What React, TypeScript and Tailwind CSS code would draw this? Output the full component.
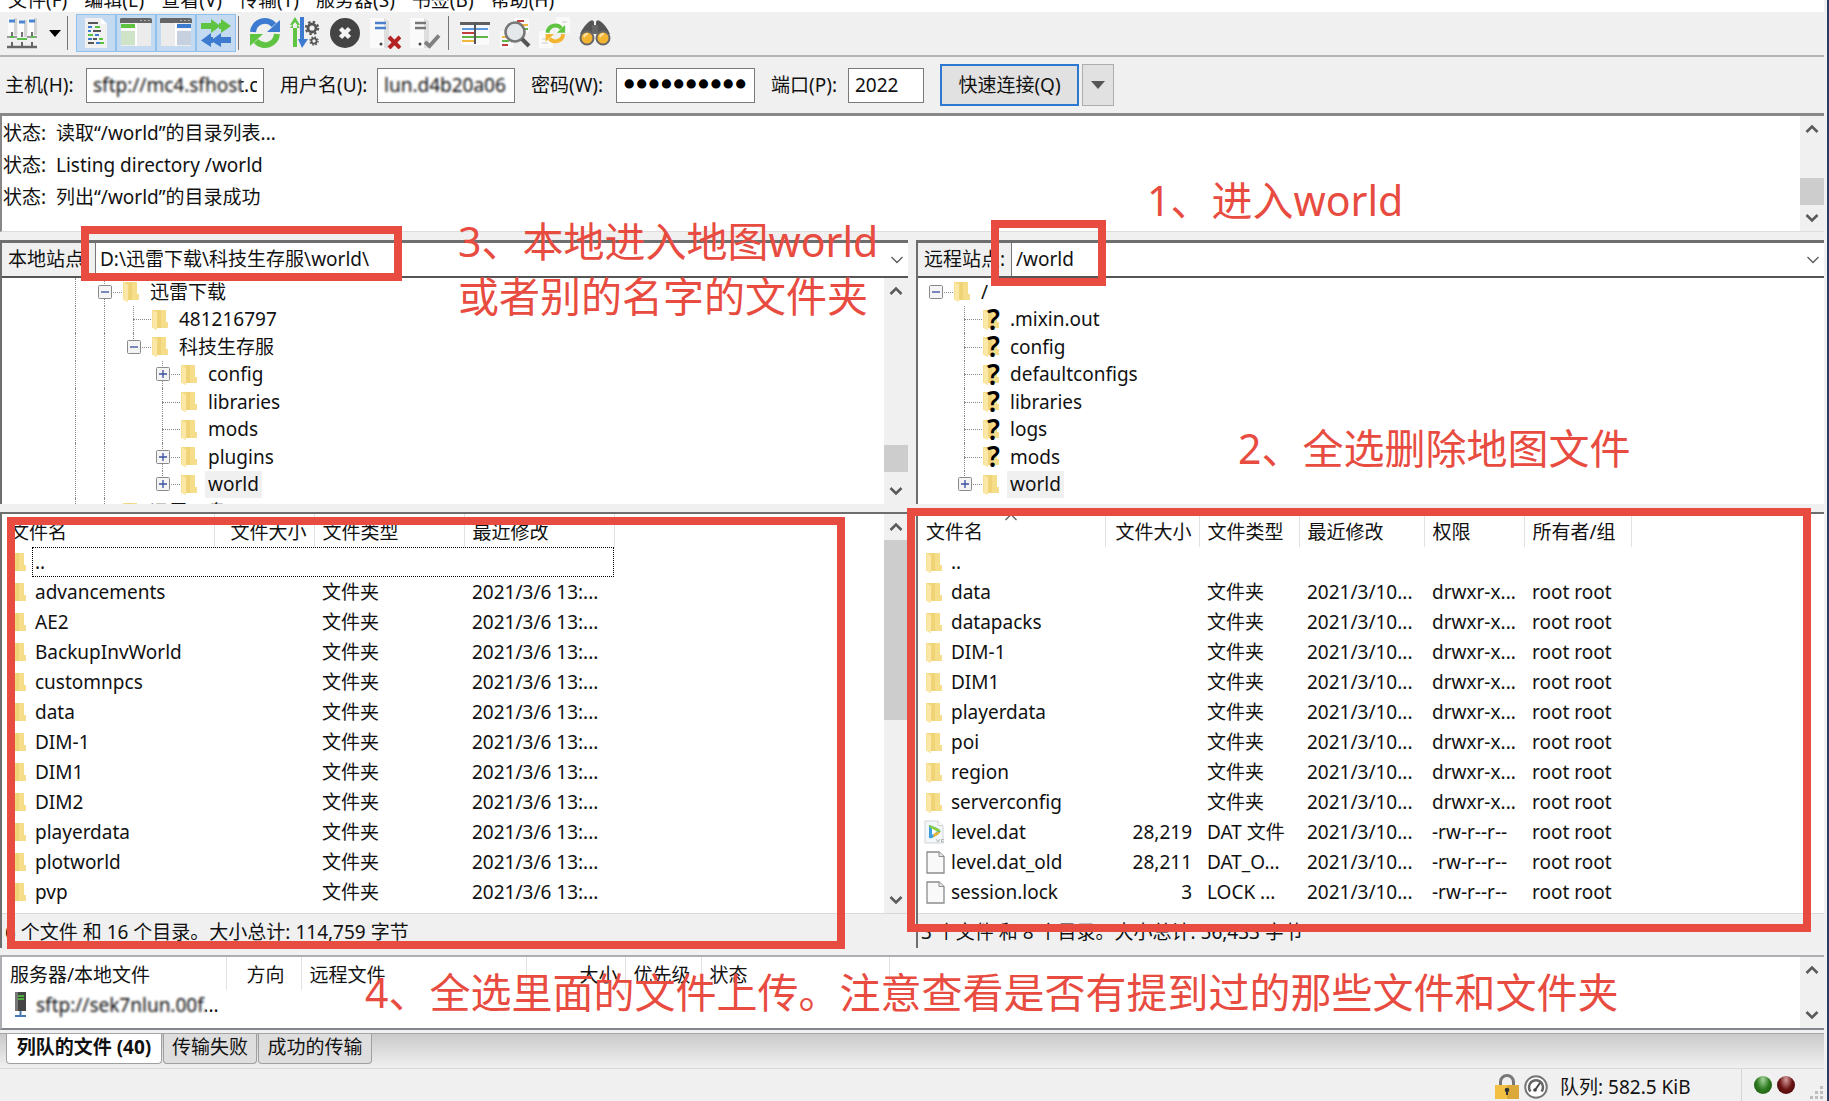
import React from "react";

type Line = "full" | "top" | "none";

/* ---------- small drawings ---------- */

function Folder() {
  return (
    <svg width="16" height="21" viewBox="0 0 16 21" aria-hidden="true">
      <path d="M1 1 H14 V13 H15.5 V19 H5 V21 L0 18.5 V1Z" fill="#f3d980" />
      <path d="M6 1 H14 V13 H15.5 V19 H5Z" fill="#f0d277" />
      <path d="M9 1 H14 V13 H15.5 V19 H9Z" fill="#f6dd8a" />
      <path d="M0.5 1 L5 4 V21 L0.5 18.5Z" fill="#fbe7a6" />
    </svg>
  );
}

function UnknownFolder() {
  return (
    <span className="relative block h-[21px] w-4">
      <Folder />
      <span className="absolute -top-1 left-1 text-[28px] leading-7 font-semibold text-black">?</span>
    </span>
  );
}

function FileIcon() {
  return (
    <svg width="19" height="23" viewBox="0 0 19 23" aria-hidden="true">
      <path d="M1 1 H13 L18 5.500 V22 H1Z" fill="#f9f9f9" stroke="#8c8c8c" strokeWidth="1.300" />
      <path d="M13 1 V5.500 H18" fill="#e8e8e8" stroke="#8c8c8c" />
    </svg>
  );
}

function MediaIcon() {
  return (
    <svg className="-ml-0.5" width="23" height="24" viewBox="0 0 23 24" aria-hidden="true">
      <path d="M1 1 H14 L19 5.500 V23 H1Z" fill="#f4f7fa" stroke="#cfd3d7" />
      <path d="M14 1 V5.500 H19" fill="#fff" stroke="#cfd3d7" />
      <path d="M5 6 Q4 4 8 6 Q17 9 16.500 11.500 Q16 14 8 18 Q4 19 5 16Z" fill="#3aa0e0" />
      <path d="M5 6 Q4 4 8 6 Q17 9 16.500 11.500 H10Z" fill="#8ccf3c" />
      <path d="M16.500 11.500 Q16 14 9 17.500 L10 13Z" fill="#f2b632" />
      <path d="M8 8.500 L13 11.500 L8 15Z" fill="#fff" />
      <path d="M12 19 L14 22 L16 19 M20 19.500 H17.500 V22 H20" fill="none" stroke="#b5b5b5" />
    </svg>
  );
}

function Chevron({ up, thin }: { up?: boolean; thin?: boolean }) {
  return (
    <svg width="14" height="10" viewBox="0 0 14 10" aria-hidden="true">
      <path d={up ? "M1.500 8 L7 2.500 L12.500 8" : "M1.500 2 L7 7.500 L12.500 2"} fill="none" stroke="#5a5a5a" strokeWidth={thin ? 1.3 : 2.6} />
    </svg>
  );
}

function Refresh({ a, b }: { a: string; b: string }) {
  return (
    <g fill="none" strokeWidth="6">
      <path d="M4 15 A12 12 0 0 1 25 8" stroke={a} />
      <path d="M31 3 V15 H18Z" fill={a} stroke="none" />
      <path d="M28 17 A12 12 0 0 1 7 24" stroke={b} />
      <path d="M1 29 V17 H14Z" fill={b} stroke="none" />
    </g>
  );
}

function Gear({ x, y, r }: { x: number; y: number; r: number }) {
  return (
    <g stroke="#555" fill="none">
      <circle cx={x} cy={y} r={r} strokeWidth={r * 0.7} />
      <circle cx={x} cy={y} r={r * 1.55} strokeWidth={r * 0.5} strokeDasharray={`${r * 0.61} ${r * 0.61}`} />
    </g>
  );
}

const icons: Record<string, React.ReactNode> = {
  sites: (
    <g>
      {[2, 12, 22].map((x, i) => (
        <g key={x}>
          <path d={`M${x} ${i === 1 ? 3 : 1} h8 v17 h-8z`} fill="#fbfbfb" />
          <path d={`M${x + 6} ${i === 1 ? 3 : 1} h3 v17 h-3z`} fill="#d4d4d4" />
          <path d={`M${x + 1} ${i === 1 ? 5 : 4} h6`} stroke="#4a86d0" strokeWidth="3" />
          <path d={`M${x + 4} 15 v5`} stroke="#444" strokeWidth="1.500" />
        </g>
      ))}
      <path d="M1 20 H11 M21 20 H31" stroke="#999" strokeWidth="2" />
      <path d="M4 20 H8 M11 22 H21 M25 20 H29" stroke="#5cbf4a" strokeWidth="2" />
      <path d="M1 30 H31" stroke="#666" strokeWidth="2.500" />
      <path d="M6 25 V30 M16 25 V30 M26 25 V30" stroke="#666" strokeWidth="2" />
    </g>
  ),
  log: (
    <g>
      <path d="M5 1 H21 L27 7 V31 H5Z" fill="#f1f1f1" />
      <path d="M21 1 V7 H27Z" fill="#fff" />
      <g strokeWidth="2">
        <path d="M8 6 H18 M13 14 H21 M13 22 H17 M8 26 H14" stroke="#555" />
        <path d="M8 10 H12 M17 10 H20 M8 14 H11 M8 22 H12 M16 26 H20" stroke="#3d7bd0" />
        <path d="M15 10 H20 M8 18 H13 M19 22 H23 M20 26 H24" stroke="#58c340" />
        <path d="M15 18 H19" stroke="#3d7bd0" />
      </g>
    </g>
  ),
  local: (
    <g>
      <path d="M1 2 H31 V29 H1Z" fill="#ececec" />
      <path d="M1 7 H15 V11 H1Z" fill="#5fc441" />
      <path d="M1 14 H15 V28 H1Z" fill="#cfe3c9" />
      <path d="M16 6 V29 M1 12.500 H15" stroke="#fff" strokeWidth="2" />
      <path d="M0 6 V2 Q0 1 2 1 H30 Q32 1 32 3 V6Z" fill="#666" />
      <path d="M20 3.500 H30" stroke="#aaa" strokeDasharray="2 2" />
    </g>
  ),
  remote: (
    <g>
      <path d="M1 2 H31 V29 H1Z" fill="#ececec" />
      <path d="M17 7 H31 V11 H17Z" fill="#3d7bd0" />
      <path d="M17 14 H31 V28 H17Z" fill="#c6d0de" />
      <path d="M16 6 V29 M17 12.500 H31" stroke="#fff" strokeWidth="2" />
      <path d="M0 6 V2 Q0 1 2 1 H30 Q32 1 32 3 V6Z" fill="#666" />
      <path d="M20 3.500 H30" stroke="#aaa" strokeDasharray="2 2" />
    </g>
  ),
  queue: (
    <g>
      <path d="M1 6 H11 V2 L19 8 V6 H21 V2 L31 9 L21 16 V12 H19 V10 L11 16 V12 H1Z" fill="#5fc441" />
      <path d="M31 20 H21 V16 L13 22 V20 H11 V16 L1 23.500 L11 30 V26 H13 V25 L21 30 V26 H31Z" fill="#3d7bd0" />
    </g>
  ),
  refresh: <Refresh a="#3d7bd0" b="#5fc441" />,
  process: (
    <g>
      <path d="M6 0 L11 8 H8 V30 H4 V8 H1Z M1 11 H11 L6 5Z" fill="#5fc441" />
      <path d="M11 0 H15 V22 H19 L13 31 L9 22 H11Z" fill="#3d7bd0" />
      <Gear x={23} y={11} r={4} />
      <Gear x={25} y={24} r={2.6} />
    </g>
  ),
  cancel: (
    <g>
      <circle cx="16" cy="16" r="15" fill="#444" />
      <path d="M11.500 11.500 L20.500 20.500 M20.500 11.500 L11.500 20.500" stroke="#f4f4f4" strokeWidth="4.500" />
    </g>
  ),
  disconnect: (
    <g>
      <path d="M1 1 H15 L20 3 V31 H1Z" fill="#fafafa" />
      <path d="M15 1 L20 4 V31 H15Z" fill="#dedede" />
      <path d="M6 6 H17 M6 11 H17" stroke="#4a80cc" strokeWidth="2.500" />
      <circle cx="12" cy="27" r="1.500" fill="#444" />
      <path d="M20 20 L31 31 M31 20 L20 31" stroke="#b52424" strokeWidth="4" />
    </g>
  ),
  reconnect: (
    <g>
      <path d="M1 1 H15 L20 3 V31 H1Z" fill="#fafafa" />
      <path d="M15 1 L20 4 V31 H15Z" fill="#dedede" />
      <path d="M6 6 H17 M6 11 H17" stroke="#777" strokeWidth="2.500" />
      <circle cx="11" cy="27" r="1.500" fill="#444" />
      <path d="M16 25 L20.500 29 L30 18.500" stroke="#808080" strokeWidth="4" fill="none" />
    </g>
  ),
  filter: (
    <g>
      <path d="M2 8 H30 V28 H2Z" fill="#fafafa" />
      <path d="M1 8 V5 H31 V8Z" fill="#606060" />
      <g strokeWidth="2">
        <path d="M3 12 H29" stroke="#5b9ae0" />
        <path d="M3 16 H15" stroke="#c04040" />
        <path d="M3 20 H29" stroke="#5fb545" />
        <path d="M3 24 H15" stroke="#f0b840" />
      </g>
      <path d="M16 6 V27" stroke="#555" strokeWidth="2" />
    </g>
  ),
  search: (
    <g>
      <path d="M15 1 H30 V16 H15Z M1 14 H14 V31 H1Z" fill="#fafafa" />
      <g strokeWidth="2">
        <path d="M18 4 H25" stroke="#c04040" />
        <path d="M23 8 H29 M3 20 H8" stroke="#f0b840" />
        <path d="M26 12 H29 M3 24 H10" stroke="#5fb545" />
        <path d="M3 28 H9" stroke="#c04040" />
      </g>
      <circle cx="16" cy="15" r="9.500" fill="#e4e8ea" stroke="#777" strokeWidth="2.500" />
      <path d="M23 22 L30 29" stroke="#555" strokeWidth="4" />
    </g>
  ),
  sync: (
    <g>
      <path d="M17 0 H31 V16 H17Z M0 14 H14 V31 H0Z" fill="#fafafa" />
      <path d="M3 22 H8 M3 26 H9 M23 5 H28" stroke="#ccc" />
      <g transform="translate(6 6) scale(0.650)">
        <Refresh a="#5fc441" b="#f3b531" />
      </g>
    </g>
  ),
  find: (
    <g>
      <path d="M11 4 Q14 2 15 5 V17 H1 Q5 8 11 4Z M21 4 Q18 2 17 5 V17 H31 Q27 8 21 4Z" fill="#555" />
      <path d="M13 8 H19 V17 H13Z" fill="#666" />
      <circle cx="8" cy="21" r="6.500" fill="#f3b531" stroke="#666" strokeWidth="2" />
      <circle cx="24" cy="21" r="6.500" fill="#f3b531" stroke="#666" strokeWidth="2" />
      <path d="M5 20 A4 4 0 0 1 9 17 M21 20 A4 4 0 0 1 25 17" stroke="#fbe3a0" strokeWidth="2" fill="none" />
    </g>
  ),
};

function ToolButton({ icon, label, on }: { icon: string; label: string; on?: boolean }) {
  return (
    <button
      type="button"
      aria-label={label}
      className={
        on
          ? "flex h-[38px] w-10 items-center justify-center border border-[#90c0ee] bg-[#c3daf1]"
          : "flex h-[38px] w-10 items-center justify-center"
      }
    >
      <svg width="32" height="32" viewBox="0 0 32 32" aria-hidden="true">
        {icons[icon]}
      </svg>
    </button>
  );
}

function Separator() {
  return <span className="h-[34px] w-px bg-[#777]" />;
}

/* ---------- shared controls ---------- */

function Scrollbar({ children, className }: { children?: React.ReactNode; className?: string }) {
  return (
    <div className={"flex w-6 shrink-0 flex-col bg-[#f0f0f0] " + (className ?? "")}>
      <button type="button" aria-label="向上滚动" className="flex h-[26px] items-center justify-center">
        <Chevron up />
      </button>
      <div className="flex flex-1 flex-col">{children}</div>
      <button type="button" aria-label="向下滚动" className="flex h-[26px] items-center justify-center">
        <Chevron />
      </button>
    </div>
  );
}

function SiteBar({ id, label, value, labelWidth }: { id: string; label: string; value: string; labelWidth: string }) {
  return (
    <div className="flex h-[35px] border-b-2 border-[#555] bg-[#f0f0f0]">
      <label htmlFor={id} className={"flex shrink-0 items-center overflow-hidden whitespace-nowrap pb-0.5 pl-[6px] " + labelWidth}>
        {label}
      </label>
      <div className="relative flex-1 border-l border-[#777] bg-white">
        <select id={id} className="h-full w-full appearance-none bg-transparent pb-0.5 pl-1 outline-none" defaultValue={value}>
          <option value={value}>{value}</option>
        </select>
        <span className="pointer-events-none absolute inset-y-0 right-1 flex items-center">
          <Chevron thin />
        </span>
      </div>
    </div>
  );
}

interface Node {
  name: string;
  guides: boolean[];
  line: Line;
  box?: "+" | "-";
  unknown?: boolean;
  selected?: boolean;
}

const lineClass: Record<Line, string> = {
  full: "absolute inset-y-0 left-[14px] border-l border-dotted border-[#888]",
  top: "absolute top-0 left-[14px] h-1/2 border-l border-dotted border-[#888]",
  none: "hidden",
};

function TreeRow({ node }: { node: Node }) {
  return (
    <li className="flex min-h-0 items-stretch">
      {node.guides.map((g, i) => (
        <span key={i} className="relative w-[29px] shrink-0">
          <span className={lineClass[g ? "full" : "none"]} />
        </span>
      ))}
      <span className="relative flex w-[29px] shrink-0 items-center justify-center">
        <span className={lineClass[node.line]} />
        <span className="absolute top-1/2 right-[-3px] left-[14px] border-t border-dotted border-[#888]" />
        {node.box && (
          <button type="button" aria-label={node.box === "+" ? "展开" : "折叠"} className="relative">
            <svg width="14" height="14" viewBox="0 0 14 14" aria-hidden="true">
              <rect x="0.500" y="0.500" width="13" height="13" rx="1" fill="#f4f4f4" stroke="#8a8a8a" />
              <path d={node.box === "+" ? "M3 7 H11 M7 3 V11" : "M3 7 H11"} stroke="#3a4fa0" strokeWidth="1.300" />
            </svg>
          </button>
        )}
      </span>
      <span className="ml-1 flex w-4 shrink-0 items-center">{node.unknown ? <UnknownFolder /> : <Folder />}</span>
      <span
        className={
          node.selected
            ? "ml-2 flex items-center bg-[#f0f0f0] px-[3px] whitespace-nowrap"
            : "ml-2 flex items-center px-[3px] whitespace-nowrap"
        }
      >
        {node.name}
      </span>
    </li>
  );
}

const localTree: Node[] = [
  { name: "迅雷下载", guides: [true], line: "full", box: "-" },
  { name: "481216797", guides: [true, true], line: "full" },
  { name: "科技生存服", guides: [true, true], line: "top", box: "-" },
  { name: "config", guides: [true, true, false], line: "full", box: "+" },
  { name: "libraries", guides: [true, true, false], line: "full" },
  { name: "mods", guides: [true, true, false], line: "full" },
  { name: "plugins", guides: [true, true, false], line: "full", box: "+" },
  { name: "world", guides: [true, true, false], line: "top", box: "+", selected: true },
];

const remoteTree: Node[] = [
  { name: "/", guides: [], line: "none", box: "-" },
  { name: ".mixin.out", guides: [false], line: "full", unknown: true },
  { name: "config", guides: [false], line: "full", unknown: true },
  { name: "defaultconfigs", guides: [false], line: "full", unknown: true },
  { name: "libraries", guides: [false], line: "full", unknown: true },
  { name: "logs", guides: [false], line: "full", unknown: true },
  { name: "mods", guides: [false], line: "full", unknown: true },
  { name: "world", guides: [false], line: "top", box: "+", selected: true },
];

const localFiles = [
  "advancements",
  "AE2",
  "BackupInvWorld",
  "customnpcs",
  "data",
  "DIM-1",
  "DIM1",
  "DIM2",
  "playerdata",
  "plotworld",
  "pvp",
];

type RemoteFile = { name: string; size: string; type: string; perm: string; icon: "folder" | "media" | "file" };

const remoteFiles: RemoteFile[] = [
  ...["data", "datapacks", "DIM-1", "DIM1", "playerdata", "poi", "region", "serverconfig"].map(
    (name): RemoteFile => ({ name, size: "", type: "文件夹", perm: "drwxr-x...", icon: "folder" }),
  ),
  { name: "level.dat", size: "28,219", type: "DAT 文件", perm: "-rw-r--r--", icon: "media" },
  { name: "level.dat_old", size: "28,211", type: "DAT_O...", perm: "-rw-r--r--", icon: "file" },
  { name: "session.lock", size: "3", type: "LOCK ...", perm: "-rw-r--r--", icon: "file" },
];

const th = "h-[33px] border-r border-[#e2e2e2] px-2 pt-0.5 text-left font-normal whitespace-nowrap";
const thRight = "h-[33px] border-r border-[#e2e2e2] px-[7px] pt-0.5 text-right font-normal whitespace-nowrap";
const td = "h-[30px] px-2 whitespace-nowrap";
const tdRight = "h-[30px] px-[7px] text-right whitespace-nowrap";

function NameCell({ icon, name }: { icon: React.ReactNode; name: string }) {
  return (
    <div className="flex items-center">
      <span className="flex w-[25px] shrink-0 items-center">{icon}</span>
      {name}
    </div>
  );
}

function Frame({ className }: { className: string }) {
  return <div aria-hidden="true" className={"pointer-events-none absolute z-10 border-8 border-[#e84b40] " + className} />;
}

function Note({ className, children }: { className: string; children: React.ReactNode }) {
  return (
    <p className={"pointer-events-none absolute z-10 text-[41px] leading-[55px] whitespace-nowrap text-[#e84b40] " + className}>
      {children}
    </p>
  );
}

function Field({ id, label, labelWidth, children }: { id: string; label: string; labelWidth: string; children: React.ReactNode }) {
  return (
    <div className="flex items-center">
      <label htmlFor={id} className={"whitespace-nowrap " + labelWidth}>
        {label}
      </label>
      {children}
    </div>
  );
}

const inputBox = "h-[35px] border border-[#7a7a7a] bg-white px-[6px] outline-none ";

export default function App() {
  return (
    <div className="relative flex min-h-screen flex-col overflow-hidden border-r-2 border-[#2c3d63] bg-[#f0f0f0] pr-[3px] font-['Noto_Sans','Noto_Sans_CJK_SC',sans-serif] text-[19px] leading-6 text-[#111]">
      <nav className="flex h-3 items-end gap-[17px] overflow-hidden bg-white pl-2">
        {["文件(F)", "编辑(E)", "查看(V)", "传输(T)", "服务器(S)", "书签(B)", "帮助(H)"].map((m) => (
          <button key={m} type="button" className="leading-6 whitespace-nowrap">
            {m}
          </button>
        ))}
      </nav>

      <div className="flex h-[45px] items-center border-b-2 border-[#b5b5b5] pb-px pl-[2px]">
        <ToolButton icon="sites" label="站点管理器" />
        <button type="button" aria-label="站点列表" className="flex h-[38px] w-[25px] items-center justify-center">
          <svg width="12" height="7" viewBox="0 0 12 7" aria-hidden="true">
            <path d="M0 0 H12 L6 7Z" fill="#000" />
          </svg>
        </button>
        <Separator />
        <div className="ml-2 flex">
          <ToolButton icon="log" label="消息日志" on />
          <ToolButton icon="local" label="本地目录树" on />
          <ToolButton icon="remote" label="远程目录树" on />
          <ToolButton icon="queue" label="传输队列" on />
        </div>
        <span className="w-0.5" />
        <Separator />
        <div className="ml-[6px] flex pr-[3px]">
          <ToolButton icon="refresh" label="刷新" />
          <ToolButton icon="process" label="处理队列" />
          <ToolButton icon="cancel" label="取消" />
          <ToolButton icon="disconnect" label="断开" />
          <ToolButton icon="reconnect" label="重新连接" />
        </div>
        <Separator />
        <div className="ml-[6px] flex">
          <ToolButton icon="filter" label="过滤器" />
          <ToolButton icon="search" label="目录比较" />
          <ToolButton icon="sync" label="同步浏览" />
          <ToolButton icon="find" label="查找文件" />
        </div>
      </div>

      <form className="flex h-14 items-center gap-4 pl-[5px]" onSubmit={(e) => e.preventDefault()}>
        <Field id="host" label="主机(H):" labelWidth="w-[81px]">
          <div className="relative">
            <input id="host" defaultValue="sftp://mc4.sfhost.c" className={inputBox + "w-[178px]"} />
            <span className="pointer-events-none absolute top-1 bottom-1 left-1 w-[152px] backdrop-blur-[1px]" />
          </div>
        </Field>
        <Field id="user" label="用户名(U):" labelWidth="w-[97px]">
          <div className="relative">
            <input id="user" defaultValue="lun.d4b20a06" className={inputBox + "w-[138px]"} />
            <span className="pointer-events-none absolute inset-1 backdrop-blur-[1px]" />
          </div>
        </Field>
        <Field id="pass" label="密码(W):" labelWidth="w-[85px]">
          <input
            id="pass"
            type="password"
            defaultValue="0123456789"
            className={inputBox + "w-[139px] font-['DejaVu_Sans',sans-serif] text-[21px] text-black [-webkit-text-stroke:3px_black]"}
          />
        </Field>
        <Field id="port" label="端口(P):" labelWidth="w-[77px]">
          <input id="port" defaultValue="2022" className={inputBox + "w-[76px]"} />
        </Field>
        <div className="flex gap-[3px]">
          <button type="submit" className="h-[42px] w-[139px] border-2 border-[#2f78d2] bg-[#e1e1e1] whitespace-nowrap">
            快速连接(Q)
          </button>
          <button type="button" aria-label="快速连接历史" className="flex h-[42px] w-8 items-center justify-center border border-[#adadad] bg-[#e1e1e1]">
            <svg width="14" height="8" viewBox="0 0 14 8" aria-hidden="true">
              <path d="M0 0 H14 L7 8Z" fill="#555" />
            </svg>
          </button>
        </div>
      </form>

      <section className="relative flex h-[119px] border-t-[3px] border-b border-l-2 border-t-[#888] border-b-[#ddd] border-l-[#888] bg-white">
        <dl className="grid flex-1 auto-rows-min grid-cols-[53px_1fr] pt-px pl-px leading-8">
          <dt>状态:</dt>
          <dd>读取“/world”的目录列表...</dd>
          <dt>状态:</dt>
          <dd>Listing directory /world</dd>
          <dt>状态:</dt>
          <dd>列出“/world”的目录成功</dd>
        </dl>
        <Scrollbar>
          <span className="mt-auto h-[27px] bg-[#cdcdcd]" />
        </Scrollbar>
      </section>

      <div className="mt-2 flex gap-2">
        <section className="relative min-w-0 flex-1">
          <div className="border-t-[3px] border-l-2 border-[#6e6e6e]">
            <SiteBar id="local-site" label="本地站点:" value="D:\迅雷下载\科技生存服\world\" labelWidth="w-[93px]" />
            <div className="flex h-[226px] bg-white">
              <div className="flex-1 overflow-hidden">
                <ul className="grid h-[220px] grid-rows-8 pl-[59px]">
                  {localTree.map((n) => (
                    <TreeRow key={n.name} node={n} />
                  ))}
                </ul>
                <ul className="grid h-7 pl-[59px]">
                  <TreeRow node={{ name: "迅雷云盘", guides: [true], line: "full" }} />
                </ul>
              </div>
              <Scrollbar>
                <span className="mt-auto mb-[6px] h-[27px] bg-[#cdcdcd]" />
              </Scrollbar>
            </div>
          </div>
          <Frame className="-top-[14px] left-[81px] h-[55px] w-[321px]" />
          <Note className="-top-[26px] left-[458px]">
            3、本地进入地图world
            <br />
            或者别的名字的文件夹
          </Note>
        </section>

        <section className="relative min-w-0 flex-1">
          <div className="border-t-[3px] border-l-2 border-[#6e6e6e]">
            <SiteBar id="remote-site" label="远程站点:" value="/world" labelWidth="w-[93px]" />
            <div className="h-[226px] overflow-hidden bg-white">
              <ul className="grid h-[220px] grid-rows-8 pl-[3px]">
                {remoteTree.map((n) => (
                  <TreeRow key={n.name} node={n} />
                ))}
              </ul>
            </div>
          </div>
          <Frame className="-top-5 left-[75px] h-[66px] w-[115px]" />
          <Note className="-top-[67px] left-[231px]">1、进入world</Note>
          <Note className="top-[181px] left-[322px]">2、全选删除地图文件</Note>
        </section>
      </div>

      <div className="mt-2 flex gap-2">
        <section className="relative min-w-0 flex-1">
          <div className="border-t-2 border-l-2 border-[#6e6e6e]">
            <div className="flex h-[399px] bg-white">
              <div className="flex-1 overflow-hidden">
                <table className="w-[612px] table-fixed border-collapse">
                  <colgroup>
                    <col className="w-[212px]" />
                    <col className="w-[100px]" />
                    <col className="w-[150px]" />
                    <col className="w-[150px]" />
                  </colgroup>
                  <thead>
                    <tr>
                      <th className={th}>文件名</th>
                      <th className={thRight}>文件大小</th>
                      <th className={th}>文件类型</th>
                      <th className={th}>最近修改</th>
                    </tr>
                  </thead>
                  <tbody>
                    <tr>
                      <td className={td + " relative"}>
                        <NameCell icon={<Folder />} name=".." />
                        <span className="absolute inset-y-0 left-[30px] w-[582px] border border-dotted border-black" />
                      </td>
                      <td />
                      <td />
                      <td />
                    </tr>
                    {localFiles.map((f) => (
                      <tr key={f}>
                        <td className={td}>
                          <NameCell icon={<Folder />} name={f} />
                        </td>
                        <td />
                        <td className={td}>文件夹</td>
                        <td className={td}>2021/3/6 13:...</td>
                      </tr>
                    ))}
                    <tr>
                      <td className={td}>
                        <NameCell icon={<Folder />} name="" />
                      </td>
                    </tr>
                  </tbody>
                </table>
              </div>
              <Scrollbar>
                <span className="h-[180px] bg-[#cdcdcd]" />
              </Scrollbar>
            </div>
            <p className="flex h-[35px] items-center border-t border-[#d9d9d9] bg-[#f0f0f0] pl-[3px] pt-0.5 whitespace-nowrap">
              6 个文件 和 16 个目录。大小总计: 114,759 字节
            </p>
          </div>
          <Frame className="top-[5px] -bottom-px left-[7px] right-[63px]" />
        </section>

        <section className="relative min-w-0 flex-1">
          <div className="border-t-2 border-l-2 border-[#6e6e6e]">
            <div className="relative h-[399px] overflow-hidden bg-white">
              <table className="w-[713px] table-fixed border-collapse">
                <colgroup>
                  <col className="w-[187px]" />
                  <col className="w-[94px]" />
                  <col className="w-[100px]" />
                  <col className="w-[125px]" />
                  <col className="w-[100px]" />
                  <col className="w-[107px]" />
                </colgroup>
                <thead>
                  <tr>
                    <th className={th + " relative"}>
                      文件名
                      <span className="absolute inset-x-0 -top-0.5 flex justify-center">
                        <Chevron up thin />
                      </span>
                    </th>
                    <th className={thRight}>文件大小</th>
                    <th className={th}>文件类型</th>
                    <th className={th}>最近修改</th>
                    <th className={th}>权限</th>
                    <th className={th}>所有者/组</th>
                  </tr>
                </thead>
                <tbody>
                  <tr>
                    <td className={td}>
                      <NameCell icon={<Folder />} name=".." />
                    </td>
                  </tr>
                  {remoteFiles.map((f) => (
                    <tr key={f.name}>
                      <td className={td}>
                        <NameCell
                          icon={f.icon === "folder" ? <Folder /> : f.icon === "media" ? <MediaIcon /> : <FileIcon />}
                          name={f.name}
                        />
                      </td>
                      <td className={tdRight}>{f.size}</td>
                      <td className={td}>{f.type}</td>
                      <td className={td}>2021/3/10...</td>
                      <td className={td}>{f.perm}</td>
                      <td className={td}>root root</td>
                    </tr>
                  ))}
                </tbody>
              </table>
            </div>
            <p className="flex h-[35px] items-center border-t border-[#d9d9d9] bg-[#f0f0f0] pl-[3px] pt-0.5 whitespace-nowrap">
              3 个文件 和 8 个目录。大小总计: 56,433 字节
            </p>
          </div>
          <Frame className="-top-1 bottom-4 right-[13px] -left-[9px]" />
        </section>
      </div>

      <section className="relative mt-[7px] flex h-[75px] border-t-2 border-b-2 border-l-2 border-t-[#adadb2] border-b-[#82868f] border-l-[#adadb2] bg-white">
        <div className="flex-1 overflow-hidden">
          <table className="w-[887px] table-fixed border-collapse">
            <colgroup>
              <col className="w-[224px]" />
              <col className="w-[75px]" />
              <col className="w-[225px]" />
              <col className="w-[99px]" />
              <col className="w-[76px]" />
              <col className="w-[188px]" />
            </colgroup>
            <thead>
              <tr>
                <th className={th}>服务器/本地文件</th>
                <th className="h-[33px] border-r border-[#e2e2e2] px-4 pt-0.5 text-right font-normal whitespace-nowrap">方向</th>
                <th className={th}>远程文件</th>
                <th className={thRight}>大小</th>
                <th className={th}>优先级</th>
                <th className={th}>状态</th>
              </tr>
            </thead>
            <tbody>
              <tr>
                <td className={td + " relative"}>
                  <div className="flex items-center">
                    <svg className="mr-2 ml-[3px] shrink-0" width="15" height="26" viewBox="0 0 15 26" aria-hidden="true">
                      <path d="M2 0 H13 V19 H2Z" fill="#444" />
                      <path d="M2 0 H5 V19 H2Z" fill="#777" />
                      <path d="M5 4 H11 M5 7 H11" stroke="#4fd03a" strokeWidth="1.500" />
                      <path d="M7.500 19 V24 M2 24 H13" stroke="#4a78b0" strokeWidth="2" />
                    </svg>
                    sftp://sek7nlun.00f...
                  </div>
                  <span className="absolute inset-y-0 left-8 w-[172px] backdrop-blur-[1px]" />
                </td>
              </tr>
            </tbody>
          </table>
        </div>
        <Scrollbar />
        <Note className="top-2 left-[363px]">4、全选里面的文件上传。注意查看是否有提到过的那些文件和文件夹</Note>
      </section>

      <div role="tablist" className="mt-[3px] flex h-9 items-start gap-px border-t border-b border-t-[#a5a5a5] border-b-[#d8d8d8] bg-linear-to-b from-[#cacaca] to-[#f0f0f0] pl-[6px]">
        <button role="tab" type="button" aria-selected="true" className="h-[30px] w-[156px] rounded-b border border-t-0 border-[#a0a0a0] bg-white pb-1 font-bold whitespace-nowrap">
          列队的文件 (40)
        </button>
        <button role="tab" type="button" aria-selected="false" className="h-[30px] w-[94px] rounded-b border border-t-0 border-[#a0a0a0] bg-[#dedede] pb-1 whitespace-nowrap">
          传输失败
        </button>
        <button role="tab" type="button" aria-selected="false" className="h-[30px] w-[114px] rounded-b border border-t-0 border-[#a0a0a0] bg-[#dedede] pb-1 whitespace-nowrap">
          成功的传输
        </button>
      </div>

      <footer className="flex h-8 items-center justify-end">
        <svg className="mt-1 mr-[5px]" width="24" height="26" viewBox="0 0 24 26" aria-hidden="true">
          <path d="M5.500 12 V8 A6.500 6.500 0 0 1 18.500 8 V12" fill="none" stroke="#777" strokeWidth="3" />
          <path d="M0 11 H24 V25 H0Z" fill="#f4c044" />
          <path d="M12 11 H24 V25 H12Z" fill="#dba93a" />
          <path d="M12 15 V21" stroke="#333" strokeWidth="2" />
          <circle cx="12" cy="16" r="2.300" fill="#333" />
        </svg>
        <svg className="mt-1 mr-3" width="24" height="26" viewBox="0 0 24 26" aria-hidden="true">
          <circle cx="12" cy="13" r="10.800" fill="#fff" stroke="#777" strokeWidth="2" />
          <path d="M6.500 17.500 A7 7 0 1 1 17.500 17.500" fill="none" stroke="#666" strokeWidth="2.500" />
          <path d="M11 16 L16 9" stroke="#444" strokeWidth="2" />
          <circle cx="11" cy="16" r="1.800" fill="#444" />
        </svg>
        <span className="w-[181px] pt-1 whitespace-nowrap">队列: 582.5 KiB</span>
        <span className="mr-3 h-8 w-px bg-[#d5d5d5]" />
        <span className="mr-[5px] h-[18px] w-[18px] rounded-full bg-radial-[at_50%_20%] from-[#a5d49b] via-[#2f7a20] to-[#174d0c]" />
        <span className="mr-[14px] h-[18px] w-[18px] rounded-full bg-radial-[at_50%_20%] from-[#d8a0a0] via-[#6d1414] to-[#3a0404]" />
        <svg className="self-end" width="15" height="16" viewBox="0 0 15 16" aria-hidden="true">
          <path d="M11 1h3v3h-3z M6 6h3v3H6z M11 6h3v3h-3z M1 11h3v3H1z M6 11h3v3H6z M11 11h3v3h-3z" fill="#bdbdbd" />
        </svg>
      </footer>
    </div>
  );
}
